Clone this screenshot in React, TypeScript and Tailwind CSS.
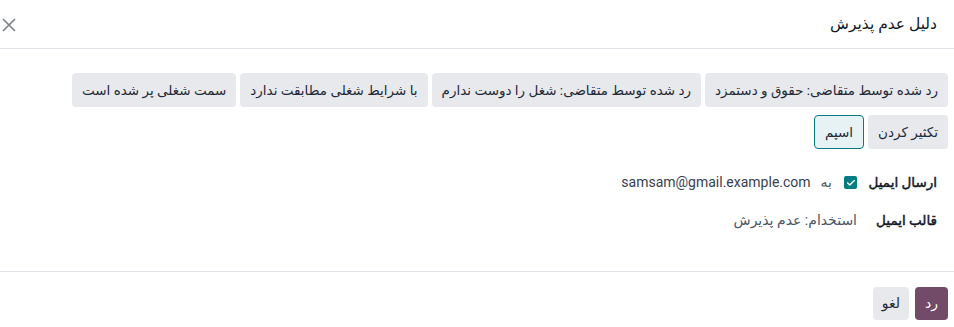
import { Check } from 'lucide-react';

const reasons = [
  'رد شده توسط متقاضی: حقوق و دستمزد',
  'رد شده توسط متقاضی: شغل را دوست ندارم',
  'با شرایط شغلی مطابقت ندارد',
  'سمت شغلی پر شده است',
  'تکثیر کردن',
];

export default function App() {
  return (
    <div
      dir="rtl"
      className="w-[954px] h-[327px] bg-white text-[#212529] flex flex-col overflow-hidden"
      style={{ fontFamily: 'Roboto, "DejaVu Sans", sans-serif' }}
    >
      {/* Header */}
      <div className="h-[49px] shrink-0 flex items-center justify-between border-b border-[#dee2e6] pr-[17px] pl-[2px]">
        <h4 className="text-[15.5px] leading-[24px] text-[#111827]">دلیل عدم پذیرش</h4>
        <button className="p-0 mt-[1px]">
          <svg width="14" height="14" viewBox="0 0 14 14" stroke="#7d8186" strokeWidth="1.7" fill="none">
            <path d="M1 1L13 13M13 1L1 13" />
          </svg>
        </button>
      </div>

      {/* Body */}
      <div className="flex-1 pt-[24px] pr-[6px] pl-4">
        <div className="flex flex-wrap gap-x-[4px] gap-y-[8px]">
          {reasons.map((r) => (
            <button
              key={r}
              className="h-[34px] px-[10px] rounded-[4px] bg-[#e7e9ed] text-[13.5px] text-[#1f2937]"
            >
              {r}
            </button>
          ))}
          <button className="h-[34px] px-[10px] rounded-[4px] bg-[#e6f2f3] border border-[#017e84] text-[13.5px] text-[#1f2937]">
            اسپم
          </button>
        </div>

        <div className="mt-[22px] pr-[11px] flex flex-col gap-[15px] text-[14px]">
          <div className="flex items-center h-[23px]">
            <div className="w-[80px] shrink-0 whitespace-nowrap text-[13.5px] text-[#111827] [-webkit-text-stroke:0.45px_#111827]">
              ارسال ایمیل
            </div>
            <span className="size-[13px] shrink-0 rounded-[2px] bg-[#017e84] flex items-center justify-center">
              <Check className="size-[10px] text-white" strokeWidth={3.5} />
            </span>
            <span className="mr-[12px] text-[#4b5563]">به</span>
            <span className="mr-[10px] text-[#374151]">samsam@gmail.example.com</span>
          </div>
          <div className="flex items-center h-[23px]">
            <div className="w-[80px] shrink-0 whitespace-nowrap text-[13.5px] text-[#111827] [-webkit-text-stroke:0.45px_#111827]">
              قالب ایمیل
            </div>
            <span className="text-[#4b5563]">استخدام: عدم پذیرش</span>
          </div>
        </div>
      </div>

      {/* Footer */}
      <div className="h-[56px] shrink-0 border-t border-[#dee2e6] flex items-start gap-[6px] pt-[15px] pr-[6px]">
        <button className="h-[33px] px-[10px] rounded-[4px] bg-[#714b67] text-white text-[14px]">رد</button>
        <button className="h-[33px] px-[9px] rounded-[4px] bg-[#e7e9ed] text-[#1f2937] text-[14px]">لغو</button>
      </div>
    </div>
  );
}
